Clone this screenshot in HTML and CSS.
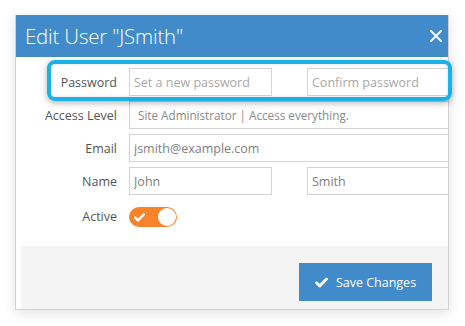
FILE: index.html
```html
<!DOCTYPE html>
<html lang="en">
<head>
    <meta charset="UTF-8">
    <meta name="viewport" content="width=device-width, initial-scale=1.0">
    <title>Edit User</title>
    <link rel="stylesheet" href="styles.css">
</head>
<body>
    <div class="stage">
        <div class="modal">
            <div class="modal-header">
                <h1>Edit User "JSmith"</h1>
                <span class="close">
                    <svg width="12" height="12" viewBox="0 0 12 12"><path d="M1 1 L11 11 M11 1 L1 11" stroke="#fff" stroke-width="2.2" stroke-linecap="round"/></svg>
                </span>
            </div>

            <div class="modal-body">
                <label>Password</label>
                <div class="pair">
                    <input type="password" placeholder="Set a new password">
                    <input type="password" placeholder="Confirm password">
                </div>

                <label>Access Level</label>
                <div class="select">Site Administrator | Access everything.</div>

                <label>Email</label>
                <input type="text" value="jsmith@example.com">

                <label>Name</label>
                <div class="pair">
                    <input type="text" value="John">
                    <input type="text" value="Smith">
                </div>

                <label class="active-label">Active</label>
                <div class="toggle">
                    <svg width="11" height="9" viewBox="0 0 11 9"><path d="M1.2 4.6 L4 7.3 L9.8 1.5" fill="none" stroke="#fff" stroke-width="2.4" stroke-linecap="round" stroke-linejoin="round"/></svg>
                    <span class="knob"></span>
                </div>
            </div>

            <div class="modal-footer">
                <button>
                    <svg width="13" height="11" viewBox="0 0 13 11"><path d="M1.5 5.8 L4.8 9 L11.5 2" fill="none" stroke="#fff" stroke-width="2.8" stroke-linecap="round" stroke-linejoin="round"/></svg>
                    Save Changes
                </button>
            </div>
        </div>

        <!-- callout around the password row -->
        <div class="callout"></div>
    </div>
</body>
</html>
```

FILE: styles.css
```css
body {
    margin: 0;
    background: #fff;
    font-family: 'Open Sans', 'Noto Sans', sans-serif;
    color: #555;
}
.stage {
    position: relative;
    padding: 15px;
}
.modal {
    width: 432px;
    border: 1px solid #d2d2d2;
    border-top: none;
    background: #fff;
    overflow: hidden;
    box-shadow: 0 3px 12px rgba(0,0,0,0.12);
}
.modal-header {
    height: 42px;
    background: #428bca;
    display: flex;
    align-items: center;
    justify-content: space-between;
    padding: 0 7px 0 10px;
    margin: 0 -1px;
}
.modal-header h1 {
    margin: 0;
    font-size: 20.5px;
    font-weight: 300;
    color: #fff;
    letter-spacing: -0.2px;
}
.close {
    display: flex;
    opacity: 0.9;
}
.modal-body {
    display: grid;
    grid-template-columns: 101px 321px;
    column-gap: 12px;
    row-gap: 5px;
    align-items: center;
    padding: 11px 0 19px;
}
.modal-body label {
    text-align: right;
    font-size: 12.5px;
    color: #555;
}
.pair {
    display: flex;
    gap: 35px;
}
input, .select {
    box-sizing: border-box;
    height: 28px;
    width: 100%;
    border: 1px solid #d4d4d4;
    padding: 0 4px;
    font-family: inherit;
    font-size: 12.5px;
    color: #808080;
    outline: none;
}
.pair input {
    width: 143px;
    flex: none;
}
input::placeholder {
    color: #a8a8a8;
}
.select {
    display: flex;
    align-items: center;
    padding: 0 8px;
    font-size: 11.7px;
    color: #8a8a8a;
}
.active-label {
    margin-top: 6px;
}
.toggle {
    margin-top: 7px;
    width: 48px;
    height: 20px;
    border-radius: 10px;
    background: #f7832b;
    display: flex;
    align-items: center;
    justify-content: space-between;
    padding: 0 1px 0 5px;
    box-sizing: border-box;
}
.knob {
    width: 18px;
    height: 18px;
    border-radius: 50%;
    background: #fff;
}
.modal-footer {
    margin-left: 5px;
    height: 63px;
    background: #f4f4f4;
    display: flex;
    justify-content: flex-end;
    align-items: flex-start;
    padding: 17px 16px 0 0;
    box-sizing: border-box;
}
button {
    width: 133px;
    height: 38px;
    border: none;
    background: #428bca;
    color: #fff;
    font-family: inherit;
    font-size: 12.5px;
    display: flex;
    align-items: center;
    justify-content: center;
    gap: 8px;
    padding: 0;
}
.callout {
    position: absolute;
    left: 47px;
    top: 60px;
    width: 397px;
    height: 33px;
    border: 4px solid #1bb1e7;
    border-radius: 8px;
    box-shadow: 0 2px 6px rgba(0,0,0,0.3), inset 0 0 3px rgba(0,0,0,0.15);
}
```
